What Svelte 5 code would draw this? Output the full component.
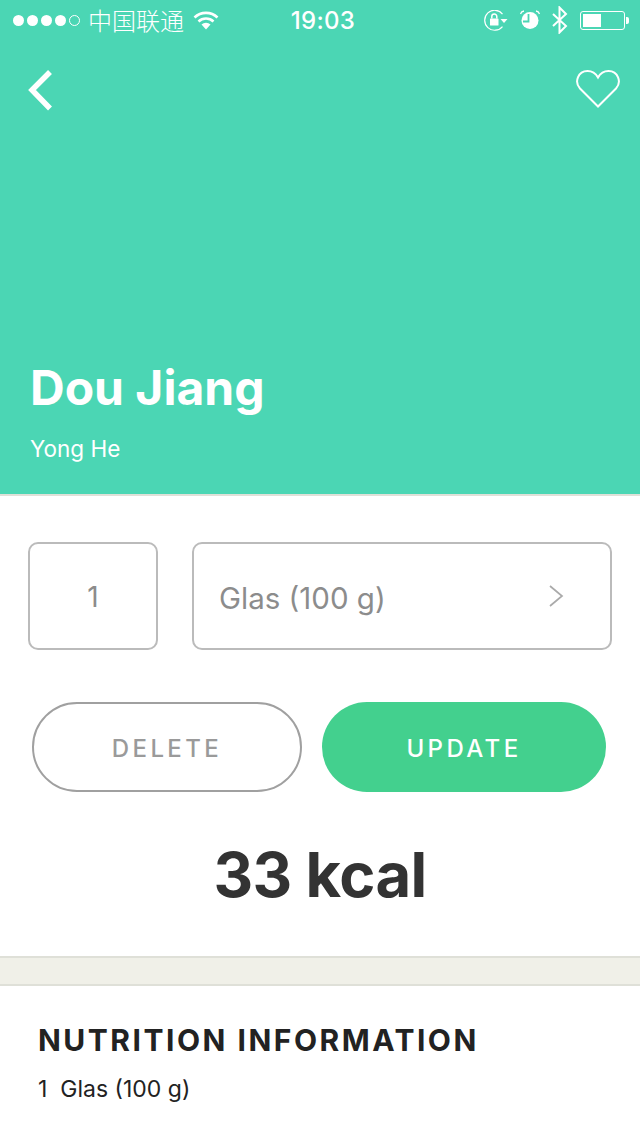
<script>
  const food = { name: 'Dou Jiang', brand: 'Yong He', qty: 1, unit: 'Glas (100 g)', kcal: 33 };
</script>

<div class="page">
  <header class="hero">
    <div class="status">
      <div class="status-left">
        <span class="dots">
          {#each [1, 2, 3, 4] as d}
            <i class="dot" data-d={d}></i>
          {/each}
          <i class="dot empty"></i>
        </span>
        <span class="carrier">中国联通</span>
        <svg class="wifi" width="26" height="20" viewBox="0 0 26 20">
          <path d="M1.5 7.5a16.500 16.500 0 0 1 23 0" fill="none" stroke="#fff" stroke-width="2.6" />
          <path d="M5.500 11.500a11 11 0 0 1 15 0" fill="none" stroke="#fff" stroke-width="2.6" />
          <path d="M8.500 14.500a6.500 6.500 0 0 1 9 0L13 19.500z" fill="#fff" />
        </svg>
      </div>
      <span class="time">19:03</span>
      <div class="status-right">
        <svg width="24" height="21" viewBox="0 0 24 21">
          <path d="M18.500 16.500A10 10 0 1 1 18.500 4" fill="none" stroke="#fff" stroke-width="1.2" />
          <path d="M16.500 9h7l-3.500 4z" fill="#fff" />
          <path d="M7.800 8.500V6.500a2.500 2.500 0 0 1 5 0v2" fill="none" stroke="#fff" stroke-width="1.500" />
          <rect x="6" y="8.500" width="8.500" height="7" rx="0.600" fill="#fff" />
        </svg>
        <svg width="20" height="20" viewBox="0 0 20 20">
          <circle cx="10" cy="10.500" r="8.500" fill="#fff" />
          <path d="M8.500 4v7.500H3" fill="none" stroke="#4bd6b4" stroke-width="1.800" />
          <path d="M0.500 4a4 4 0 0 1 3.500-3M19.500 4a4 4 0 0 0-3.500-3" fill="none" stroke="#fff" stroke-width="1.300" />
        </svg>
        <svg width="16" height="28" viewBox="0 0 16 28">
          <path d="M1 8l13 12-6.500 6.500V1.500L14 8 1 20" fill="none" stroke="#fff" stroke-width="2" />
        </svg>
        <div class="battery">
          <div class="cell"><div class="charge"></div></div>
          <div class="nub"></div>
        </div>
      </div>
    </div>

    <nav class="nav">
      <svg width="28" height="42" viewBox="0 0 28 42">
        <path d="M24 3L6 21 24 39.500" fill="none" stroke="#fff" stroke-width="5.500" />
      </svg>
      <svg width="46" height="40" viewBox="0 0 46 40">
        <path
          d="M23 37.500L5 19.500C-1 13 3 2 12.500 2 17 2 20.500 4 23 8.500 25.500 4 29 2 33.500 2 43 2 47 13 41 19.500z"
          fill="none"
          stroke="#fff"
          stroke-width="2"
        />
      </svg>
    </nav>

    <div class="titles">
      <h1>{food.name}</h1>
      <p>{food.brand}</p>
    </div>
  </header>

  <section class="editor">
    <div class="fields">
      <div class="field qty">{food.qty}</div>
      <div class="field unit">
        <span>{food.unit}</span>
        <svg width="16" height="24" viewBox="0 0 16 24">
          <path d="M2 2l12 10L2 22" fill="none" stroke="#aaa" stroke-width="1.700" />
        </svg>
      </div>
    </div>
    <div class="actions">
      <button class="btn delete">DELETE</button>
      <button class="btn update">UPDATE</button>
    </div>
    <div class="kcal">{food.kcal} kcal</div>
  </section>

  <div class="divider"></div>

  <section class="nutrition">
    <h2>NUTRITION INFORMATION</h2>
    <p>{food.qty}&nbsp; {food.unit}</p>
  </section>
</div>

<style>
  :global(body) {
    background: #fff;
  }
  .page {
    width: 640px;
    height: 1136px;
    overflow: hidden;
    font-family: Inter, "Noto Sans CJK SC", sans-serif;
    background: #fff;
  }
  .hero {
    height: 494px;
    background: #4bd6b4;
    color: #fff;
    border-bottom: 2px solid #dfe0d8;
    display: flex;
    flex-direction: column;
  }
  .status {
    height: 40px;
    display: grid;
    grid-template-columns: 1fr auto 1fr;
    align-items: center;
    padding: 0 11px 0 13px;
  }
  .status-left {
    display: flex;
    align-items: center;
  }
  .dots {
    display: flex;
    gap: 3px;
  }
  .dot {
    width: 11px;
    height: 11px;
    border-radius: 50%;
    background: #fff;
    box-sizing: border-box;
  }
  .dot.empty {
    background: none;
    border: 1px solid #fff;
  }
  .carrier {
    margin-left: 8px;
    font-family: "Noto Sans CJK SC", sans-serif;
    font-size: 24px;
    font-weight: 300;
    line-height: 40px;
  }
  .wifi {
    margin-left: 9px;
  }
  .time {
    margin-left: 4px;
    padding-top: 1px;
    font-size: 24px;
    font-weight: 500;
    letter-spacing: 0.3px;
  }
  .status-right {
    display: flex;
    align-items: center;
    justify-content: flex-end;
    gap: 12px;
  }
  .battery {
    display: flex;
    align-items: center;
  }
  .cell {
    width: 45px;
    height: 19px;
    box-sizing: border-box;
    border: 1px solid #fff;
    border-radius: 3px;
    padding: 2px;
  }
  .charge {
    width: 18px;
    height: 100%;
    background: #fff;
  }
  .nub {
    width: 3px;
    height: 7px;
    background: #fff;
    margin-left: 1px;
    border-radius: 0 2px 2px 0;
  }
  .nav {
    display: flex;
    justify-content: space-between;
    align-items: flex-start;
    padding: 29px 19px 0 26px;
  }
  .titles {
    margin-top: auto;
    padding: 0 30px 30px;
  }
  h1 {
    margin: 0;
    font-size: 48px;
    font-weight: 700;
    line-height: 60px;
  }
  .titles p {
    margin: 16px 0 0;
    font-size: 22.500px;
    line-height: 30px;
  }
  .editor {
    padding: 46px 28px 0;
    height: 460px;
    box-sizing: border-box;
  }
  .fields {
    display: flex;
    gap: 34px;
  }
  .field {
    height: 108px;
    box-sizing: border-box;
    border: 2px solid #bbb;
    border-radius: 10px;
    color: #8c8c8c;
    font-size: 29.500px;
    display: flex;
    align-items: center;
  }
  .qty {
    width: 130px;
    justify-content: center;
    font-size: 28px;
    padding-top: 2px;
  }
  .unit {
    flex: 1;
    justify-content: space-between;
    padding: 0 46px 0 25px;
  }
  .unit span {
    padding-top: 3px;
  }
  .actions {
    display: flex;
    gap: 20px;
    margin: 52px 6px 0 4px;
  }
  .btn {
    height: 90px;
    border-radius: 45px;
    font-family: inherit;
    font-size: 24px;
    font-weight: 500;
    letter-spacing: 3.400px;
    box-sizing: border-box;
    padding: 2px 0 0;
  }
  .delete {
    width: 270px;
    background: #fff;
    border: 2px solid #a0a0a0;
    color: #9a9a9a;
  }
  .update {
    width: 284px;
    background: #43d08e;
    border: 0;
    color: #fff;
  }
  .kcal {
    margin-top: 42px;
    text-align: center;
    font-size: 61.500px;
    font-weight: 700;
    letter-spacing: -0.600px;
    line-height: 82px;
    color: #333;
  }
  .divider {
    height: 26px;
    background: #f0f0e8;
    border-top: 2px solid #dfe0d8;
    border-bottom: 2px solid #dfe0d8;
  }
  .nutrition {
    padding: 35px 38px 0;
    color: #222;
  }
  h2 {
    margin: 0;
    font-size: 30px;
    font-weight: 700;
    letter-spacing: 2.500px;
    line-height: 38px;
  }
  .nutrition p {
    margin: 15px 0 0;
    font-size: 23px;
    line-height: 30px;
  }
</style>
